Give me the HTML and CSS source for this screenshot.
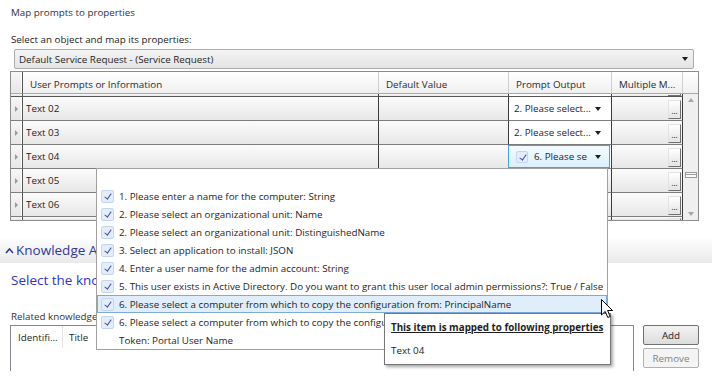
FILE: index.html
```html
<!DOCTYPE html>
<html>
<head>
<meta charset="utf-8">
<link rel="stylesheet" href="styles.css">
</head>
<body>
<div class="screen">
  <div class="title">Map prompts to properties</div>
  <div class="label">Select an object and map its properties:</div>
  <div class="combo"><span>Default Service Request - (Service Request)</span><i class="arrow"></i></div>

  <div class="grid">
    <div class="table">
      <div class="row head">
        <div class="c rh"></div>
        <div class="c">User Prompts or Information</div>
        <div class="c">Default Value</div>
        <div class="c">Prompt Output</div>
        <div class="c">Multiple M...</div>
      </div>
      <div class="row sliver">
        <div class="c rh"></div><div class="c"></div><div class="c"></div><div class="c po"></div>
        <div class="c mm"><span class="dots-end"></span></div>
      </div>
      <div class="row">
        <div class="c rh"><i class="tri"></i></div>
        <div class="c">Text 02</div>
        <div class="c"></div>
        <div class="c po"><span>2. Please select...</span><i class="arrow"></i></div>
        <div class="c mm"><span class="dots">...</span></div>
      </div>
      <div class="row">
        <div class="c rh"><i class="tri"></i></div>
        <div class="c">Text 03</div>
        <div class="c"></div>
        <div class="c po"><span>2. Please select...</span><i class="arrow"></i></div>
        <div class="c mm"><span class="dots">...</span></div>
      </div>
      <div class="row">
        <div class="c rh"><i class="tri"></i></div>
        <div class="c">Text 04</div>
        <div class="c"></div>
        <div class="c po sel"><div class="selbox"><span class="cb"></span><span>6. Please se</span><i class="arrow"></i></div></div>
        <div class="c mm"><span class="dots">...</span></div>
      </div>
      <div class="row">
        <div class="c rh"><i class="tri"></i></div>
        <div class="c">Text 05</div>
        <div class="c"></div>
        <div class="c"></div>
        <div class="c mm"><span class="dots">...</span></div>
      </div>
      <div class="row">
        <div class="c rh"><i class="tri"></i></div>
        <div class="c">Text 06</div>
        <div class="c"></div>
        <div class="c"></div>
        <div class="c mm"><span class="dots">...</span></div>
      </div>
      <div class="row sliver last">
        <div class="c rh"></div><div class="c"></div><div class="c"></div><div class="c"></div>
        <div class="c mm"><span class="dots-top"></span></div>
      </div>
    </div>
    <div class="vscroll">
      <div class="corner"></div>
      <div class="track"><i class="up"></i><i class="thumb"></i><i class="down"></i></div>
    </div>
  </div>

  <div class="band">
    <svg class="caret" width="9" height="7" viewBox="0 0 9 7"><polyline points="1,6 4.5,2 8,6" fill="none" stroke="#2e3a9f" stroke-width="1.6"/></svg>
    <span>Knowledge Articles</span>
  </div>
  <div class="subhead">Select the knowledge articles</div>
  <div class="label2">Related knowledge articles:</div>
  <div class="related">
    <div class="listbox">
      <div class="lb-head"><div class="lb-col id">Identifi...</div><div class="lb-col">Title</div></div>
    </div>
    <div class="buttons">
      <button class="btn">Add</button>
      <button class="btn disabled">Remove</button>
    </div>
  </div>

  <div class="popup">
    <div class="item"><span class="cb"></span>1. Please enter a name for the computer: String</div>
    <div class="item"><span class="cb"></span>2. Please select an organizational unit: Name</div>
    <div class="item"><span class="cb"></span>2. Please select an organizational unit: DistinguishedName</div>
    <div class="item"><span class="cb"></span>3. Select an application to install: JSON</div>
    <div class="item"><span class="cb"></span>4. Enter a user name for the admin account: String</div>
    <div class="item"><span class="cb"></span>5. This user exists in Active Directory. Do you want to grant this user local admin permissions?: True / False</div>
    <div class="item hot"><span class="cb"></span>6. Please select a computer from which to copy the configuration from: PrincipalName</div>
    <div class="item"><span class="cb"></span>6. Please select a computer from which to copy the configuration from: Name</div>
    <div class="item token">Token: Portal User Name</div>
  </div>

  <div class="tooltip">
    <div class="tt-title">This item is mapped to following properties</div>
    <div class="tt-body">Text 04</div>
  </div>

  <svg class="cursor" width="13" height="20" viewBox="0 0 13 20">
    <path d="M0.5,0.5 L0.5,16 L4.2,12.4 L6.8,18.5 L9.2,17.5 L6.6,11.5 L11.5,11.5 Z" fill="#fff" stroke="#000" stroke-width="1" stroke-linejoin="miter"/>
  </svg>
</div>
</body>
</html>
```
FILE: styles.css
```css
html, body { margin: 0; padding: 0; background: #fff; }
.screen {
  position: relative;
  width: 712px;
  height: 381px;
  overflow: hidden;
  font-family: "Open Sans", "Noto Sans", sans-serif;
  font-size: 9.8px;
  color: #1e1e1e;
}
.title { padding: 6px 0 0 11px; line-height: 14px; color: #333; }
.label { margin: 13px 0 0 11px; line-height: 14px; color: #222; }

.combo {
  margin: 2px 0 0 14px;
  width: 680px;
  height: 20px;
  box-sizing: border-box;
  border: 1px solid #acacac;
  border-radius: 2px;
  background: linear-gradient(#f4f4f4, #e4e4e4);
  display: flex;
  align-items: center;
  justify-content: space-between;
  padding: 0 5px 0 4px;
}
.arrow {
  display: block;
  width: 0; height: 0;
  border-left: 3px solid transparent;
  border-right: 3px solid transparent;
  border-top: 4px solid #1e1e1e;
}

.grid {
  margin: 2px 0 0 10px;
  width: 689px;
  height: 150px;
  box-sizing: border-box;
  border: 1px solid #8c8c8c;
  display: flex;
}
.table { width: 672px; display: flex; flex-direction: column; }
.row { display: grid; grid-template-columns: 12px 356px 130px 103px 71px; height: 24px; }
.row.head { height: 22px; }
.row.sliver { height: 3px; }
.c {
  box-sizing: border-box;
  border-right: 1px solid #3c3c3c;
  border-bottom: 1px solid #7d7d7d;
  background: linear-gradient(#fbfbfb, #e7e7e7);
  display: flex;
  align-items: center;
  padding-left: 3px;
  overflow: hidden;
  white-space: nowrap;
}
.head .c {
  background: linear-gradient(#ffffff, #f0f0f0);
  border-right-color: #cfcfcf;
  border-bottom-color: #a8a8a8;
  padding-left: 7px;
  padding-top: 3px;
  color: #2a2a2a;
}
.head .c.rh, .c.rh {
  padding-left: 4px;
  background: linear-gradient(#f6f6f6, #e6e6e6);
  border-right: 1px solid #555;
  box-shadow: inset -1px 0 #fff;
}
.sliver .c { border-bottom-color: #555; }
.row.last .c { border-bottom: none; }
.tri {
  display: block; width: 0; height: 0;
  border-left: 3px solid #9a9a9a;
  border-top: 3px solid transparent;
  border-bottom: 3px solid transparent;
}
.c.po { background: #fff; padding: 0 10px 0 5px; justify-content: space-between; }
.sliver .c.po { background: #fff; }
.c.po.sel { background: #fff; padding: 0; justify-content: flex-start; overflow: visible; }
.selbox {
  box-sizing: border-box;
  margin-left: -1px;
  width: 102px;
  height: 23px;
  align-self: flex-start;
  border: 1px solid #3ca6e5;
  background: linear-gradient(#f4fbff, #daeffc);
  display: flex;
  align-items: center;
  padding: 0 8px 0 7px;
}
.selbox .cb { width: 12px; height: 12px; margin-right: 6px; }
.selbox .arrow { margin-left: auto; }
.c.mm { justify-content: flex-end; align-items: flex-end; padding: 0 1px 0 0; }
.dots {
  box-sizing: border-box;
  width: 13px; height: 19px;
  margin-bottom: 1px;
  border: 1px solid;
  border-color: #e2e2e2 #707070 #707070 #e2e2e2;
  background: linear-gradient(#ffffff, #e4e4e4);
  display: flex;
  justify-content: center;
  align-items: flex-end;
  padding-bottom: 3px;
  font-family: "Liberation Sans", sans-serif;
  font-size: 7px;
  font-weight: bold;
  line-height: 6px;
  letter-spacing: 0;
  color: #4848b8;
}
.dots-end {
  box-sizing: border-box;
  width: 13px; height: 2px;
  border-right: 1px solid #707070;
  border-bottom: 1px solid #707070;
}
.row.last .c.mm { align-items: flex-start; }
.dots-top {
  box-sizing: border-box;
  width: 13px; height: 3px;
  margin-top: 1px;
  border-top: 1px solid #e2e2e2;
  border-right: 1px solid #707070;
}

.vscroll { width: 15px; display: flex; flex-direction: column; }
.corner {
  height: 22px;
  box-sizing: border-box;
  border-bottom: 1px solid #a8a8a8;
  background: linear-gradient(#ffffff, #f0f0f0);
}
.track {
  flex: 1;
  background: #efefef;
  display: flex;
  flex-direction: column;
  align-items: center;
}
.up {
  display: block; width: 0; height: 0;
  margin-top: 4px;
  border-left: 3px solid transparent;
  border-right: 3px solid transparent;
  border-bottom: 4px solid #a6a6a6;
}
.thumb {
  display: block;
  box-sizing: border-box;
  margin-top: 70px;
  width: 12px; height: 6px;
  border: 1px solid #9a9a9a;
  background: linear-gradient(#fafafa 0, #fafafa 1px, #9a9a9a 1px, #9a9a9a 2px, #fafafa 2px);
}
.down {
  display: block; width: 0; height: 0;
  margin-top: auto;
  margin-bottom: 4px;
  border-left: 3px solid transparent;
  border-right: 3px solid transparent;
  border-top: 4px solid #a6a6a6;
}

.band {
  margin-top: 16px;
  height: 26px;
  background: linear-gradient(#ffffff, #e9e9e9);
  display: flex;
  align-items: center;
  padding-left: 5px;
  color: #2e3a9f;
  font-size: 13.5px;
  white-space: nowrap;
}
.caret { margin-right: 2px; flex: none; }
.subhead {
  margin-top: 8px;
  white-space: nowrap;
  line-height: 18px;
  padding-left: 11px;
  font-size: 13.5px;
  color: #3434c2;
}
.label2 {
  margin-top: 21px;
  white-space: nowrap;
  line-height: 14px;
  padding-left: 11px;
  color: #333;
}
.related { margin-top: 1px; display: flex; padding-left: 10px; }
.listbox {
  width: 624px;
  height: 46px;
  box-sizing: border-box;
  border: 1px solid #828790;
  border-bottom: none;
}
.lb-head { display: flex; height: 22px; }
.lb-col { display: flex; align-items: center; padding-left: 6px; }
.lb-col.id {
  width: 52px;
  box-sizing: border-box;
  padding-left: 7px;
  border-right: 1px solid #e2e2e2;
}
.buttons { margin-left: 9px; display: flex; flex-direction: column; gap: 3px; }
.btn {
  width: 56px;
  height: 20px;
  box-sizing: border-box;
  padding: 0;
  border: 1px solid #707070;
  border-radius: 2px;
  background: linear-gradient(#f3f3f3, #dcdcdc);
  font: inherit;
  color: #1e1e1e;
}
.btn.disabled { border-color: #adb2b5; background: #f4f4f4; color: #838383; }

.popup {
  position: absolute;
  left: 96px;
  top: 168px;
  width: 512px;
  height: 182px;
  box-sizing: border-box;
  border: 1px solid #a0a0a0;
  background: #fff;
  padding-top: 18px;
}
.item {
  height: 18px;
  display: flex;
  align-items: center;
  padding-left: 4px;
  white-space: nowrap;
  overflow: hidden;
  color: #1e1e1e;
}
.item.token { padding-left: 22px; }
.item.hot { background: #e0eefb; box-shadow: inset 0 0 0 1px #7fa9d9; }
.cb {
  position: relative;
  flex: none;
  width: 13px; height: 13px;
  box-sizing: border-box;
  margin-right: 5px;
  border: 1px solid #c3d5ef;
  border-radius: 2px;
  background: #e4eefb;
}
.cb::after {
  content: "";
  position: absolute;
  left: 4px; top: 1px;
  width: 2.5px; height: 6px;
  border: solid #4655bd;
  border-width: 0 1px 1px 0;
  transform: rotate(35deg);
}

.tooltip {
  position: absolute;
  left: 384px;
  top: 313px;
  width: 227px;
  height: 52px;
  box-sizing: border-box;
  border: 1px solid #767676;
  background: #fff;
  box-shadow: 2px 2px 3px rgba(0, 0, 0, 0.35);
  padding: 7px 6px 0 6px;
}
.tt-title { line-height: 14px; font-weight: bold; text-decoration: underline; white-space: nowrap; }
.tt-body { margin-top: 9px; line-height: 14px; }

.cursor { position: absolute; left: 601px; top: 299px; }
```
